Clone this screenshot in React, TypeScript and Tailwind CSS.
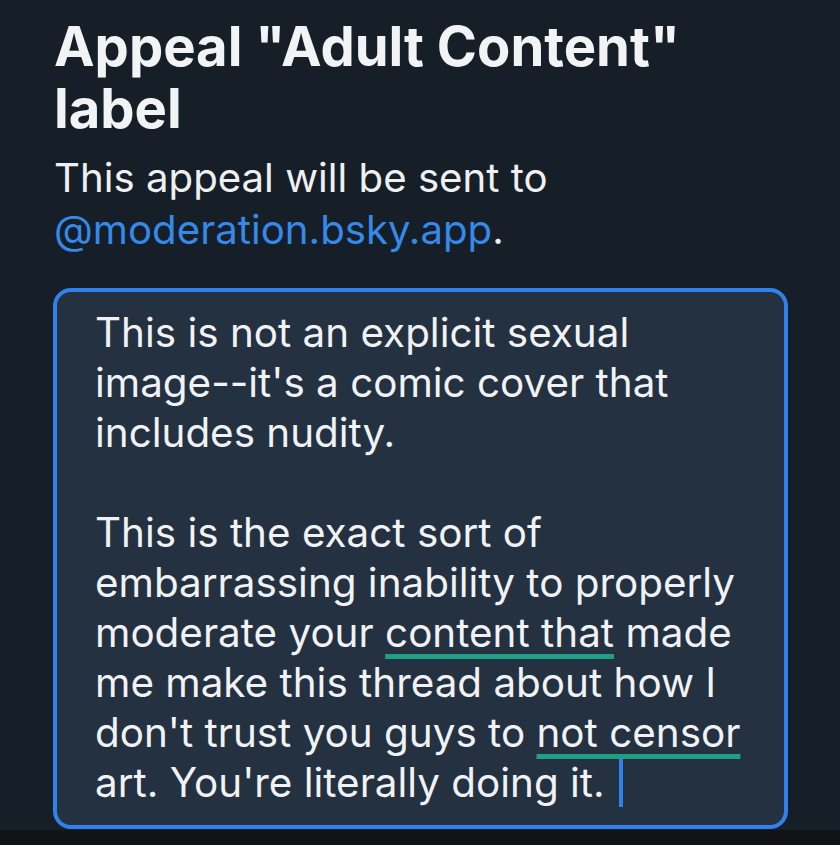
import React from "react";

const UL = "underline decoration-[#1fa083] decoration-[5px] underline-offset-[7px]";

export default function App() {
  const font = { fontFamily: "Inter, 'Noto Sans', sans-serif" };
  return (
    <div className="w-[840px] h-[845px] bg-[#161e27] flex flex-col overflow-hidden" style={font}>
      <div className="flex-1 pl-[54px] pr-[40px] pt-[15px]">
        <h1 className="text-[54.4px] leading-[62px] font-bold text-[#f1f3f5]">
          Appeal "Adult Content"
          <br />
          label
        </h1>
        <p className="mt-[13px] text-[40.2px] leading-[52px] text-[#eef0f2]">
          This appeal will be sent to
          <br />
          <span className="text-[#3589e8]">@moderation.bsky.app</span>.
        </p>
        <div className="mt-[32px] -ml-[1px] w-[735px] h-[541px] rounded-[18px] border-[4px] border-[#2f82ee] bg-[#243140] pl-[38px] pr-[4px] pt-[16px]">
          <div className="text-[40.4px] leading-[50px] text-[#f0f2f5] whitespace-nowrap">
            <div>This is not an explicit sexual</div>
            <div>image--it's a comic cover that</div>
            <div>includes nudity.</div>
            <div className="h-[50px]"></div>
            <div>This is the exact sort of</div>
            <div>embarrassing inability to properly</div>
            <div>
              moderate your <span className={UL}>content that</span> made
            </div>
            <div>me make this thread about how I</div>
            <div>
              don't trust you guys to <span className={UL}>not censor</span>
            </div>
            <div>
              art. You're literally doing it.
              <span className="inline-block w-[4px] h-[48px] bg-[#2f82ee] align-[-10px] ml-[14px]"></span>
            </div>
          </div>
        </div>
      </div>
      <div className="h-[15px] bg-[#121316]"></div>
    </div>
  );
}
